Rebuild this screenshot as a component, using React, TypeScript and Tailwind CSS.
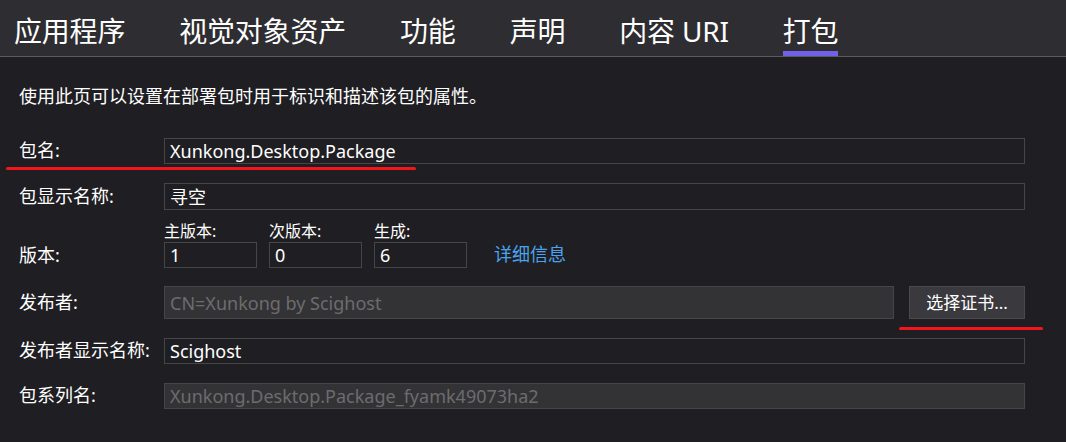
import React from 'react';

const tabs = ['应用程序', '视觉对象资产', '功能', '声明', '内容 URI', '打包'];

const font = { fontFamily: '"Noto Sans", "Noto Sans CJK SC", sans-serif' };

const Field = ({ value, disabled = false, className = '' }: { value: string; disabled?: boolean; className?: string }) => (
  <div
    className={`flex items-center border border-[#464649] px-[5px] text-[18px] leading-none ${
      disabled ? 'bg-[#333336] text-[#6c6c6e]' : 'bg-[#1f1e22] text-white'
    } ${className}`}
  >
    {value}
  </div>
);

const App = () => {
  return (
    <div className="relative w-[1066px] h-[442px] bg-[#1f1e22] overflow-hidden" style={font}>
      {/* --- TAB BAR --- */}
      <header className="h-[57px] bg-[#2e2d31] border-b border-[#5c5c5f] flex gap-[54px] pl-[14px]">
        {tabs.map((tab, i) => (
          <div key={tab} className="relative h-[56px] pt-[17px]">
            <span className="block text-[28px] leading-[28px] text-white whitespace-nowrap tracking-[-0.2px]">{tab}</span>
            {i === tabs.length - 1 && <div className="absolute left-0 right-0 bottom-0 h-[5px] bg-[#7160e8]" />}
          </div>
        ))}
      </header>

      {/* --- FORM --- */}
      <main className="pl-[19px] pr-[41px] text-[18px] text-white">
        <p className="mt-[29px] h-[20px] leading-[20px]">使用此页可以设置在部署包时用于标识和描述该包的属性。</p>

        <div className="mt-[31px] flex items-center">
          <span className="w-[145px]">包名:</span>
          <Field value="Xunkong.Desktop.Package" className="flex-1 h-[26px]" />
        </div>

        <div className="mt-[19px] flex items-center">
          <span className="w-[145px]">包显示名称:</span>
          <Field value="寻空" className="flex-1 h-[27px]" />
        </div>

        <div className="mt-[11px] flex items-end">
          <span className="w-[145px] h-[26px] leading-[26px]">版本:</span>
          <div className="flex gap-[12px]">
            {[
              ['主版本:', '1'],
              ['次版本:', '0'],
              ['生成:', '6'],
            ].map(([label, val]) => (
              <div key={label} className="flex flex-col">
                <span className="text-[16px] leading-[20px] h-[21px]">{label}</span>
                <Field value={val} className="w-[93px] h-[26px]" />
              </div>
            ))}
          </div>
          <a className="ml-[27px] mb-[1px] text-[#4aa3ec] leading-[26px]">详细信息</a>
        </div>

        <div className="mt-[18px] flex items-center">
          <span className="w-[145px]">发布者:</span>
          <Field value="CN=Xunkong by Scighost" disabled className="flex-1 h-[33px]" />
          <button className="ml-[15px] w-[116px] h-[33px] bg-[#3a393d] border border-[#4a4a4d] text-white text-[17px]">
            选择证书...
          </button>
        </div>

        <div className="mt-[18px] flex items-center">
          <span className="w-[145px] whitespace-nowrap">发布者显示名称:</span>
          <Field value="Scighost" className="flex-1 h-[26px]" />
        </div>

        <div className="mt-[18px] flex items-center">
          <span className="w-[145px]">包系列名:</span>
          <Field value="Xunkong.Desktop.Package_fyamk49073ha2" disabled className="flex-1 h-[26px]" />
        </div>
      </main>

      {/* --- RED ANNOTATIONS --- */}
      <div className="absolute left-[6px] top-[167px] w-[410px] h-[3px] bg-[#f2161c] rounded-full" />
      <div className="absolute left-[899px] top-[327px] w-[144px] h-[3px] bg-[#f2161c] rounded-full" />
    </div>
  );
};

export default App;
